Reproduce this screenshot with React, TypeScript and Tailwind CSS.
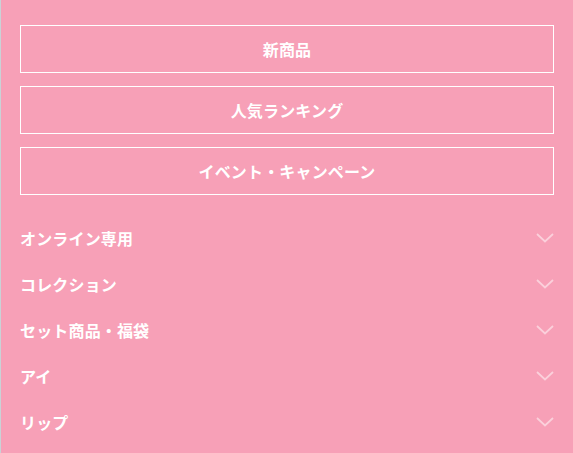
import React from "react";

const buttons = ["新商品", "人気ランキング", "イベント・キャンペーン"];
const rows = ["オンライン専用", "コレクション", "セット商品・福袋", "アイ", "リップ"];

function Chevron() {
  return (
    <svg width="18" height="10" viewBox="0 0 18 10" fill="none" className="shrink-0">
      <path d="M1 1l8 7.5L17 1" stroke="#ffffff" strokeOpacity="0.5" strokeWidth="1.8" />
    </svg>
  );
}

export default function App() {
  return (
    <div
      className="min-h-[453px] bg-[#f7a0b7] border-l border-[#c9d2d6] pl-[19px] pr-[19px] pt-[25px] text-white"
      style={{ fontFamily: '"Noto Sans CJK JP", "Noto Sans", sans-serif' }}
    >
      <div className="flex flex-col gap-[13px]">
        {buttons.map((b) => (
          <div
            key={b}
            className="h-[48px] border border-white flex items-center justify-center text-[16px] font-bold leading-none tracking-[0.01em]"
          >
            {b}
          </div>
        ))}
      </div>
      <ul className="mt-[20px]">
        {rows.map((r) => (
          <li
            key={r}
            className="h-[46px] flex items-center justify-between text-[16px] font-bold leading-none tracking-[0.01em]"
          >
            <span>{r}</span>
            <Chevron />
          </li>
        ))}
      </ul>
    </div>
  );
}
